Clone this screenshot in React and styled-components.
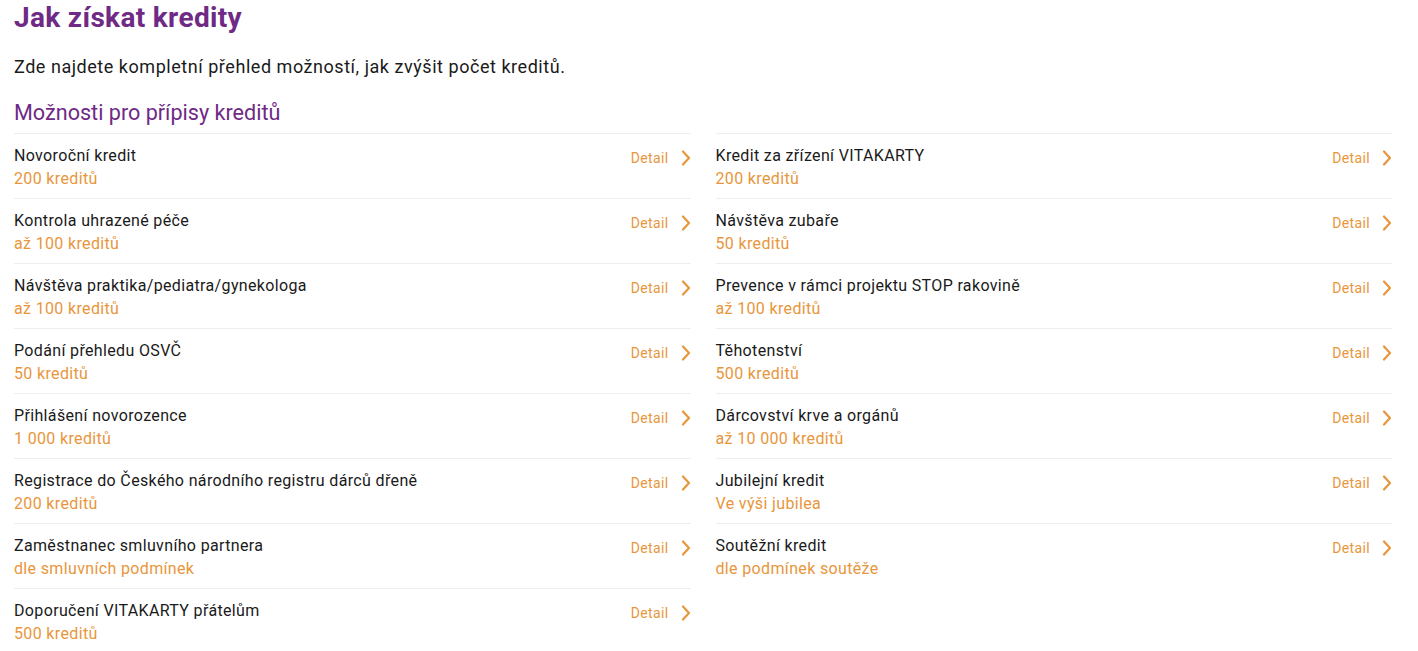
import React from 'react';
import styled, { createGlobalStyle } from 'styled-components';

const GlobalStyle = createGlobalStyle`
  body {
    margin: 0;
    background: #fff;
    font-family: Roboto, "Liberation Sans", Arial, sans-serif;
    color: #1a1a1a;
  }
`;

const purple = '#6f2a86';
const orange = '#e8963c';

const Page = styled.div`
  padding: 0 26px 0 14px;
`;

const Title = styled.h1`
  margin: 0;
  padding-top: 1px;
  font-size: 28px;
  line-height: 33px;
  font-weight: 700;
  letter-spacing: 0.33px;
  color: ${purple};
`;

const Lead = styled.p`
  margin: 21px 0 0;
  font-size: 18px;
  line-height: 24px;
  letter-spacing: 0.54px;
`;

const SectionTitle = styled.h2`
  margin: 20px 0 0;
  font-size: 21.6px;
  line-height: 28px;
  font-weight: 400;
  color: ${purple};
`;

const Columns = styled.div`
  display: grid;
  grid-template-columns: 1fr 1fr;
  column-gap: 25px;
  margin-top: 6px;
`;

const List = styled.ul`
  list-style: none;
  margin: 0;
  padding: 0;
`;

const Item = styled.li`
  display: flex;
  align-items: flex-start;
  justify-content: space-between;
  height: 54px;
  padding-top: 10px;
  border-top: 1px solid #eeeeee;
`;

const Texts = styled.div`
  display: flex;
  flex-direction: column;
`;

const Name = styled.span`
  font-size: 16px;
  line-height: 23px;
  letter-spacing: 0.35px;
`;

const Amount = styled.span`
  font-size: 16px;
  line-height: 23px;
  letter-spacing: 0.35px;
  color: ${orange};
`;

const DetailLink = styled.a`
  display: flex;
  align-items: center;
  gap: 12px;
  margin-top: 4px;
  font-size: 14px;
  line-height: 20px;
  letter-spacing: 0.35px;
  color: ${orange};
  text-decoration: none;
  cursor: pointer;
`;

const Chevron = () => (
  <svg width="10" height="16" viewBox="0 0 10 16" fill="none">
    <path d="M2 1.5 L8 8 L2 14.5" stroke={orange} strokeWidth="2.2" strokeLinecap="round" strokeLinejoin="round" />
  </svg>
);

const left = [
  ['Novoroční kredit', '200 kreditů'],
  ['Kontrola uhrazené péče', 'až 100 kreditů'],
  ['Návštěva praktika/pediatra/gynekologa', 'až 100 kreditů'],
  ['Podání přehledu OSVČ', '50 kreditů'],
  ['Přihlášení novorozence', '1 000 kreditů'],
  ['Registrace do Českého národního registru dárců dřeně', '200 kreditů'],
  ['Zaměstnanec smluvního partnera', 'dle smluvních podmínek'],
  ['Doporučení VITAKARTY přátelům', '500 kreditů'],
];

const right = [
  ['Kredit za zřízení VITAKARTY', '200 kreditů'],
  ['Návštěva zubaře', '50 kreditů'],
  ['Prevence v rámci projektu STOP rakovině', 'až 100 kreditů'],
  ['Těhotenství', '500 kreditů'],
  ['Dárcovství krve a orgánů', 'až 10 000 kreditů'],
  ['Jubilejní kredit', 'Ve výši jubilea'],
  ['Soutěžní kredit', 'dle podmínek soutěže'],
];

const CreditList = ({ items }) => (
  <List>
    {items.map(([name, amount]) => (
      <Item key={name}>
        <Texts>
          <Name>{name}</Name>
          <Amount>{amount}</Amount>
        </Texts>
        <DetailLink>
          Detail
          <Chevron />
        </DetailLink>
      </Item>
    ))}
  </List>
);

export default function App() {
  return (
    <Page>
      <GlobalStyle />
      <Title>Jak získat kredity</Title>
      <Lead>Zde najdete kompletní přehled možností, jak zvýšit počet kreditů.</Lead>
      <SectionTitle>Možnosti pro přípisy kreditů</SectionTitle>
      <Columns>
        <CreditList items={left} />
        <CreditList items={right} />
      </Columns>
    </Page>
  );
}
